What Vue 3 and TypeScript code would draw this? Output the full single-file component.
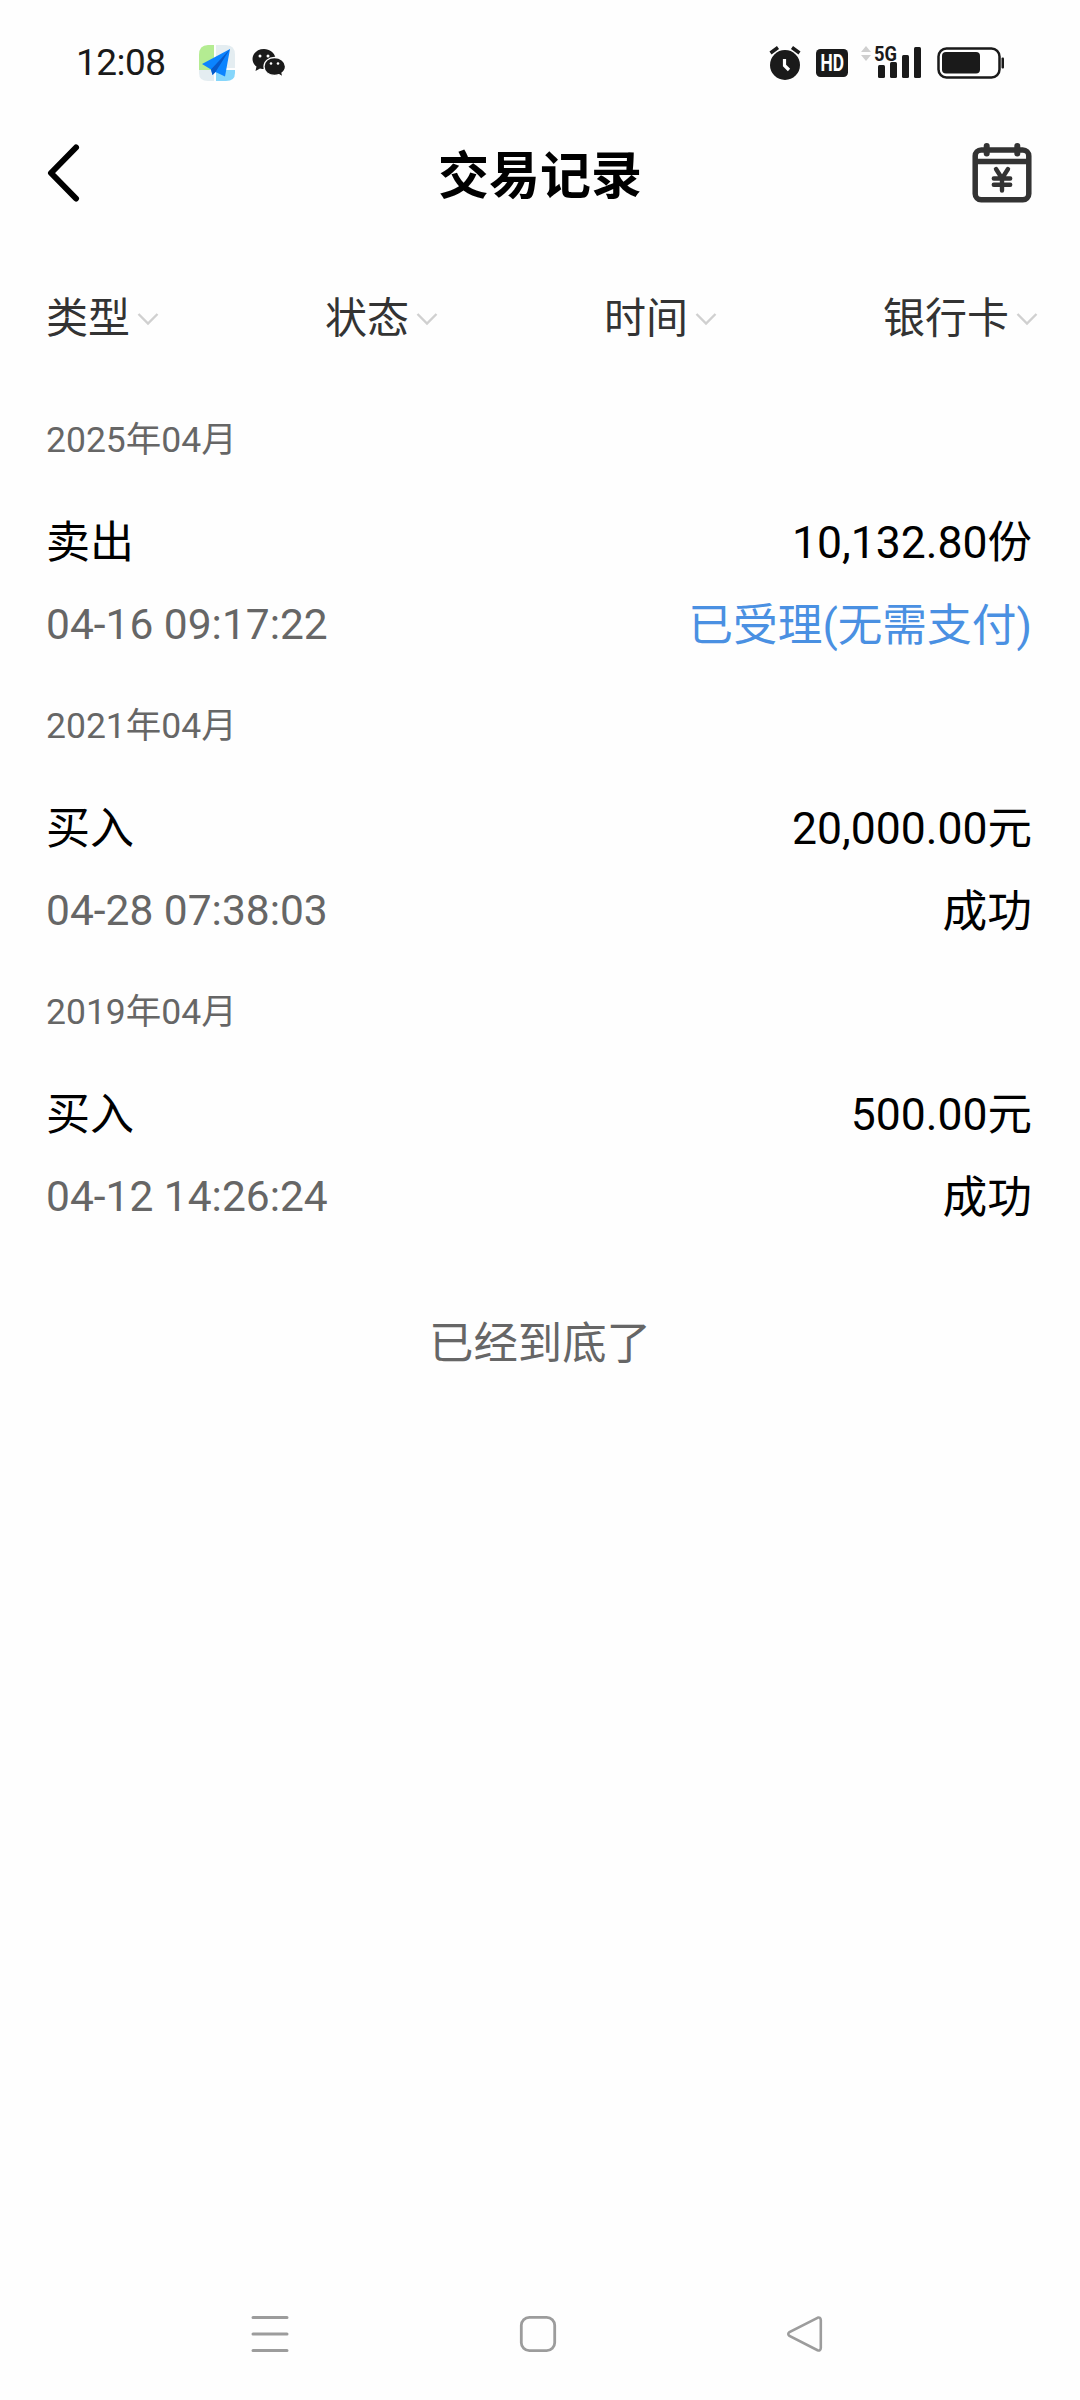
<script setup lang="ts">
interface Entry {
  month: string
  kind: string
  amount: string
  time: string
  status: string
  pending?: boolean
}

const filters: string[] = ['类型', '状态', '时间', '银行卡']

const entries: Entry[] = [
  { month: '2025年04月', kind: '卖出', amount: '10,132.80份', time: '04-16 09:17:22', status: '已受理(无需支付)', pending: true },
  { month: '2021年04月', kind: '买入', amount: '20,000.00元', time: '04-28 07:38:03', status: '成功' },
  { month: '2019年04月', kind: '买入', amount: '500.00元', time: '04-12 14:26:24', status: '成功' },
]
</script>

<template>
  <div class="screen">
    <div class="status-bar">
      <span class="clock">12:08</span>
      <svg class="app-icon" width="40" height="40" viewBox="0 0 40 40">
        <path d="M2 27V12Q2 2 11 2H17V27Z" fill="#b4ec92" />
        <path d="M19 2H29Q38 2 38 12V25H19Z" fill="#e4edf1" />
        <path d="M2 27H17V38H11Q2 38 2 30Z" fill="#e4edf1" />
        <path d="M19 27H38V30Q38 38 29 38H19Z" fill="#86d6fb" />
        <path d="M33 6L5 21L14 26.500L15.500 32L18.500 29L28 33.500Z" fill="#0b84ff" />
        <path d="M33 6L14 26.500L15.500 32L18.500 29Z" fill="#0759c9" />
      </svg>
      <svg class="chat-icon" width="36" height="32" viewBox="0 0 36 32">
        <path d="M13 2C6.400 2 1.500 6.400 1.500 12C1.500 15 3 17.700 5.500 19.500L4.500 24L9 21.500C10.500 21.900 12 22 14 22C24 21 25 15 24.500 11C23.500 5.500 18.500 2 13 2Z" fill="#1a1a1a" />
        <path d="M23.500 10.500C17.500 10.500 13 14.500 13 19.500S17.500 28.500 23.500 28.500C25 28.500 26.500 28.200 28 27.700L32 30L31 26C33.200 24.400 34.500 22 34.500 19.500C34.500 14.500 29.500 10.500 23.500 10.500Z" fill="#1a1a1a" stroke="#fff" stroke-width="1.300" />
        <g fill="#fff"><circle cx="9" cy="9" r="1.500" /><circle cx="17" cy="9" r="1.500" /><circle cx="20" cy="16.500" r="1.300" /><circle cx="27" cy="16.500" r="1.300" /></g>
      </svg>
      <div class="indicators">
        <svg width="32" height="36" viewBox="0 0 32 36">
          <circle cx="16" cy="20" r="15" fill="#1a1a1a" />
          <path d="M1.500 8L9 2.500M30.500 8L23 2.500" stroke="#1a1a1a" stroke-width="3.500" />
          <path d="M15.500 14V20.500L20 25" stroke="#fff" stroke-width="3.200" fill="none" />
        </svg>
        <svg class="hd" width="32" height="28" viewBox="0 0 32 28">
          <rect width="32" height="28" rx="4.500" fill="#1a1a1a" />
          <text x="4.500" y="22" textLength="23.500" lengthAdjust="spacingAndGlyphs">HD</text>
        </svg>
        <svg class="signal" width="62" height="44" viewBox="0 -4 62 44">
          <path d="M1 7L6 1L11 7ZM1 10H11L6 16Z" fill="#cfcfcf" />
          <g fill="#1a1a1a">
            <rect x="18" y="20" width="7" height="13" rx="1.500" />
            <rect x="30" y="17" width="7" height="16" rx="1.500" />
            <rect x="42" y="10" width="7" height="23" rx="1.500" />
            <rect x="54" y="2" width="7" height="31" rx="1.500" />
          </g>
          <text x="14" y="15.500" class="network" textLength="23" lengthAdjust="spacingAndGlyphs">5G</text>
        </svg>
        <svg class="battery" width="68" height="32" viewBox="0 0 68 32">
          <rect x="1.500" y="1.500" width="61" height="29" rx="8" fill="#fff" stroke="#1a1a1a" stroke-width="2.500" />
          <rect x="5" y="5" width="38" height="21.500" rx="4" fill="#1a1a1a" />
          <rect x="64.500" y="10.500" width="2.500" height="11" rx="1" fill="#1a1a1a" />
        </svg>
      </div>
    </div>

    <header class="header">
      <svg class="back" width="34" height="60" viewBox="0 0 34 60">
        <path d="M30 4.500L5 30L30 55.500" fill="none" stroke="#000" stroke-width="6" stroke-linecap="round" stroke-linejoin="round" />
      </svg>
      <h1>交易记录</h1>
      <svg class="calendar" width="60" height="60" viewBox="0 0 60 60" fill="none" stroke="#333" stroke-width="5.500">
        <rect x="3.200" y="7" width="53.600" height="49.800" rx="6" />
        <path d="M3 18.500H57" />
        <path d="M14.700 3V10.500M45.300 3V10.500" stroke-width="6" stroke-linecap="round" />
        <path d="M24 26L30 35.500L36 26M30 35V47.500M21.800 35.500H38.200M21.800 41.700H38.200" stroke-width="4.400" stroke-linecap="round" />
      </svg>
    </header>

    <nav class="filters">
      <div v-for="name in filters" :key="name" class="filter">
        <span>{{ name }}</span>
        <svg width="22" height="14" viewBox="0 0 22 14">
          <path d="M1.500 2L11 11.500L20.500 2" fill="none" stroke="#d0d0d0" stroke-width="2.400" />
        </svg>
      </div>
    </nav>

    <main>
      <section v-for="entry in entries" :key="entry.month" class="entry">
        <div class="month">{{ entry.month }}</div>
        <div class="row main-row">
          <span class="kind">{{ entry.kind }}</span>
          <span class="amount">{{ entry.amount }}</span>
        </div>
        <div class="row detail-row">
          <span class="time">{{ entry.time }}</span>
          <span :class="['state', { pending: entry.pending }]">{{ entry.status }}</span>
        </div>
      </section>
      <p class="end">已经到底了</p>
    </main>

    <footer class="nav-bar">
      <svg width="38" height="38" viewBox="0 0 38 38">
        <path d="M2 2.500H36M2 19H36M2 35.500H36" stroke="#9c9c9c" stroke-width="3" stroke-linecap="round" />
      </svg>
      <svg width="38" height="38" viewBox="0 0 38 38">
        <rect x="2.300" y="2.300" width="33.400" height="33.400" rx="8" fill="none" stroke="#9c9c9c" stroke-width="2.800" />
      </svg>
      <svg width="38" height="38" viewBox="0 0 38 38">
        <path d="M31.500 2.800L3.500 17Q1 19 3.500 21L31.500 35.200Q34.500 36.200 34.800 33V5Q34.500 1.800 31.500 2.800Z" fill="none" stroke="#9c9c9c" stroke-width="2.600" />
      </svg>
    </footer>
  </div>
</template>

<style>
body {
  margin: 0;
  background: #fefefe;
}
</style>

<style scoped>
.screen {
  display: flex;
  flex-direction: column;
  box-sizing: border-box;
  width: 1080px;
  height: 2400px;
  background: #fefefe;
  color: #000;
  font-family: Roboto, "Noto Sans CJK SC", sans-serif;
}
svg {
  display: block;
  flex: none;
}
.status-bar {
  display: flex;
  align-items: center;
  height: 126px;
  padding: 0 75px 0 76px;
  box-sizing: border-box;
}
.clock {
  width: 121px;
  font-size: 37px;
  line-height: 44px;
  letter-spacing: -0.5px;
  color: #1a1a1a;
}
.chat-icon {
  margin-left: 14px;
}
.indicators {
  display: flex;
  align-items: center;
  margin-left: auto;
}
.hd {
  margin-left: 15px;
}
.hd text {
  font-size: 23px;
  font-weight: 700;
  fill: #fff;
}
.signal {
  margin-left: 12px;
}
.network {
  font-size: 21px;
  font-weight: 700;
  fill: #1a1a1a;
  stroke: #fefefe;
  stroke-width: 2px;
  paint-order: stroke;
}
.battery {
  margin-left: 15px;
}
.header {
  display: flex;
  align-items: center;
  justify-content: space-between;
  height: 94px;
  padding: 0 48px 0 46px;
}
.header h1 {
  margin: 8px 0 0 28px;
  font-size: 51px;
  font-weight: 700;
  line-height: 70px;
}
.filters {
  display: flex;
  justify-content: space-between;
  height: 100px;
  margin-top: 49px;
  padding: 0 42px 0 46px;
}
.filter {
  display: flex;
  align-items: center;
  gap: 7px;
  font-size: 42px;
  line-height: 60px;
  color: #333;
}
.entry {
  height: 286px;
  padding: 0 48px 0 46px;
}
.month {
  padding-top: 41px;
  font-size: 35.500px;
  line-height: 60px;
  color: #666;
}
.row {
  display: flex;
  justify-content: space-between;
}
.main-row {
  margin-top: 33px;
  font-size: 44.500px;
  line-height: 80px;
}
.kind {
  font-size: 44px;
}
.detail-row {
  font-size: 44.700px;
  line-height: 86px;
}
.time {
  font-size: 42.500px;
  line-height: 84px;
  color: #666;
}
.pending {
  color: #4a90e2;
}
.end {
  margin: 77px 0 0;
  font-size: 44.400px;
  line-height: 80px;
  text-align: center;
  color: #666;
}
.nav-bar {
  display: flex;
  justify-content: space-between;
  margin-top: auto;
  padding: 0 256px 47px 251px;
}
</style>
